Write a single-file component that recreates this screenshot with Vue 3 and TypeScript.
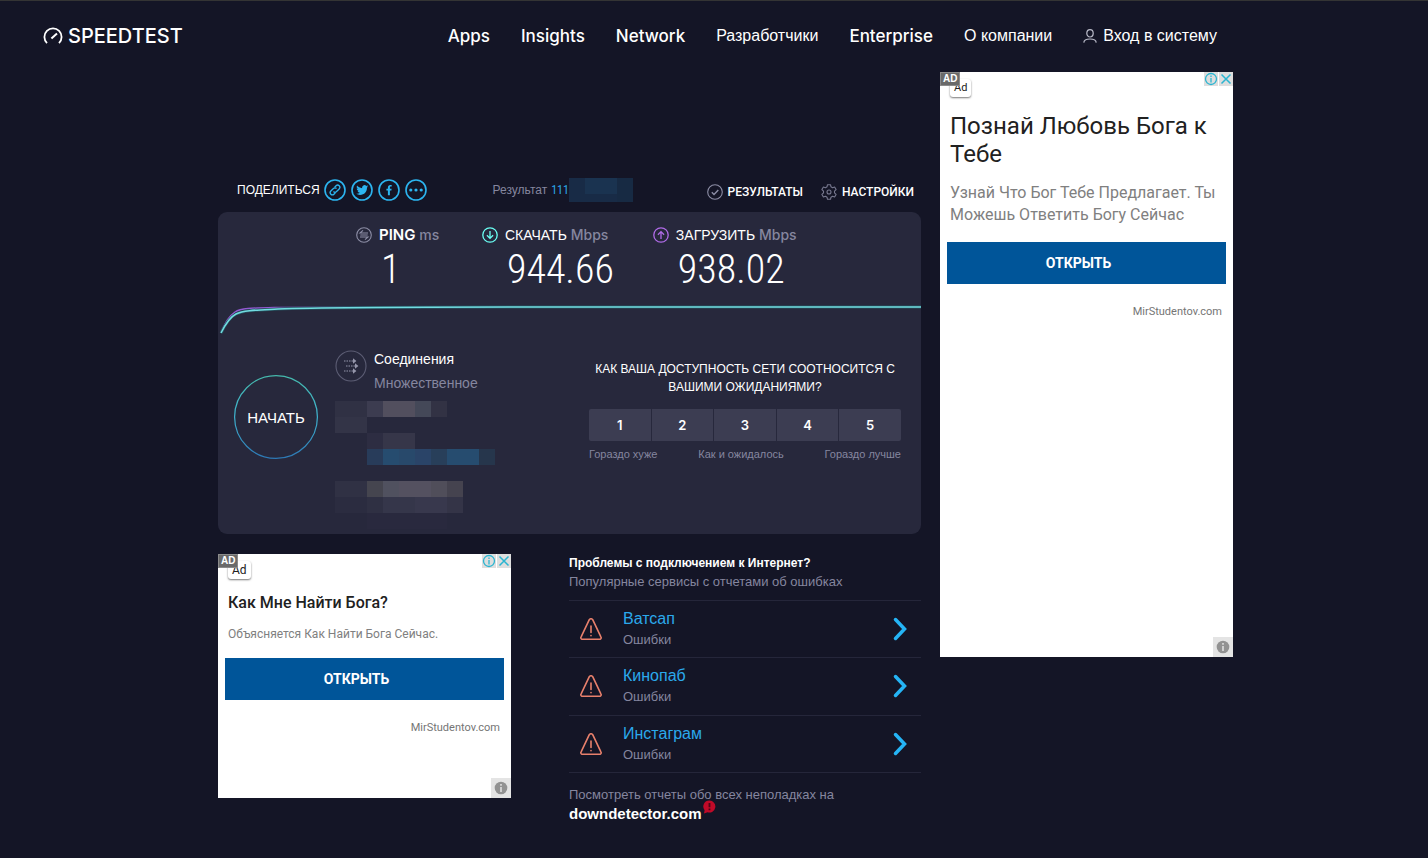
<script setup lang="ts">
interface NavItem { label: string; latin: boolean }
interface Cell { x: number; y: number; w: number; fill: string }
interface Ad { id: string; title: string; text: string; large: boolean }

const nav: NavItem[] = [
  { label: 'Apps', latin: true },
  { label: 'Insights', latin: true },
  { label: 'Network', latin: true },
  { label: 'Разработчики', latin: false },
  { label: 'Enterprise', latin: true },
  { label: 'О компании', latin: false },
]

const cells: Cell[] = [
  { x: 0, y: 0, w: 2, fill: '#303144' },
  { x: 2, y: 0, w: 1, fill: '#3c3c50' },
  { x: 3, y: 0, w: 2, fill: '#524f5e' },
  { x: 5, y: 0, w: 1, fill: '#444858' },
  { x: 6, y: 0, w: 1, fill: '#323244' },
  { x: 0, y: 1, w: 2, fill: '#333447' },
  { x: 2, y: 2, w: 1, fill: '#2d2d42' },
  { x: 3, y: 2, w: 2, fill: '#363649' },
  { x: 2, y: 3, w: 1, fill: '#283c5a' },
  { x: 3, y: 3, w: 1, fill: '#264c6f' },
  { x: 4, y: 3, w: 1, fill: '#28496b' },
  { x: 5, y: 3, w: 1, fill: '#2a4468' },
  { x: 6, y: 3, w: 1, fill: '#283f5a' },
  { x: 7, y: 3, w: 2, fill: '#264c6f' },
  { x: 9, y: 3, w: 1, fill: '#26364c' },
  { x: 0, y: 5, w: 2, fill: '#303144' },
  { x: 2, y: 5, w: 1, fill: '#45454f' },
  { x: 3, y: 5, w: 1, fill: '#50515f' },
  { x: 4, y: 5, w: 2, fill: '#545160' },
  { x: 6, y: 5, w: 1, fill: '#504e5a' },
  { x: 7, y: 5, w: 1, fill: '#45434f' },
  { x: 0, y: 6, w: 2, fill: '#2b2c40' },
  { x: 2, y: 6, w: 1, fill: '#2f3043' },
  { x: 3, y: 6, w: 2, fill: '#35364a' },
  { x: 5, y: 6, w: 2, fill: '#38384d' },
  { x: 7, y: 6, w: 1, fill: '#343447' },
  { x: 2, y: 7, w: 5, fill: '#29293e' },
]

const ads: Ad[] = [
  { id: 'bottom', title: 'Как Мне Найти Бога?', text: 'Объясняется Как Найти Бога Сейчас.', large: false },
  { id: 'side', title: 'Познай Любовь Бога к Тебе', text: 'Узнай Что Бог Тебе Предлагает. Ты Можешь Ответить Богу Сейчас', large: true },
]

const services: string[] = ['Ватсап', 'Кинопаб', 'Инстаграм']
const scores: number[] = [1, 2, 3, 4, 5]
</script>

<template>
  <div class="page">
    <header class="header">
      <a class="logo" href="#" aria-label="Speedtest">
        <svg class="logo-mark" viewBox="0 0 20 18" fill="none" stroke="#fff" stroke-width="1.8">
          <path d="M4 16.2A8.6 8.6 0 1 1 16 16.2" />
          <path d="M8.4 11.6L14 6.4" stroke-width="2" />
        </svg>
        <span class="logo-text">SPEEDTEST</span>
      </a>
      <nav class="nav">
        <a v-for="item in nav" :key="item.label" href="#" :class="{ latin: item.latin }">{{ item.label }}</a>
        <a class="login" href="#">
          <svg class="user" viewBox="0 0 14 14" fill="none" stroke="#b9bac8" stroke-width="1.2">
            <ellipse cx="7" cy="4.3" rx="3.2" ry="3.7" />
            <path d="M.8 13.6c.2-3 2.6-3.6 6.2-3.6s6 .6 6.200 3.600" />
          </svg>
          <span>Вход в систему</span>
        </a>
      </nav>
    </header>

    <main class="main">
      <div class="content">
        <div class="toolbar">
          <span class="share-title">ПОДЕЛИТЬСЯ</span>
          <div class="share">
            <a href="#" aria-label="Ссылка">
              <svg viewBox="0 0 22 22" fill="none" stroke="#2cb5f0" stroke-width="1.6">
                <circle cx="11" cy="11" r="10" />
                <g stroke-width="1.3" transform="rotate(-45 11 11)">
                  <path d="M9.500 13.200H7.300a2.200 2.200 0 0 1 0-4.400h3.700a2.200 2.200 0 0 1 2.200 2.200" />
                  <path d="M12.500 8.800h2.200a2.200 2.200 0 0 1 0 4.400H11A2.200 2.200 0 0 1 8.800 11" />
                </g>
              </svg>
            </a>
            <a href="#" aria-label="Twitter">
              <svg viewBox="0 0 22 22">
                <circle cx="11" cy="11" r="10" fill="none" stroke="#2cb5f0" stroke-width="1.6" />
                <path fill="#2cb5f0" transform="translate(5.200 5) scale(.5)" d="M23.950 4.570a10 10 0 0 1-2.820.770 4.960 4.960 0 0 0 2.160-2.720c-.95.550-2 .950-3.130 1.180A4.920 4.920 0 0 0 11.780 8.300C7.690 8.100 4.070 6.130 1.640 3.160a4.930 4.930 0 0 0 1.520 6.570 4.900 4.900 0 0 1-2.230-.610v.060a4.920 4.920 0 0 0 3.950 4.830 5 5 0 0 1-2.210.080 4.940 4.940 0 0 0 4.600 3.420A9.870 9.870 0 0 1 0 19.540 13.990 13.990 0 0 0 7.550 21.750c9.050 0 14-7.500 14-13.980 0-.210 0-.420-.020-.630a9.940 9.940 0 0 0 2.420-2.570z" />
              </svg>
            </a>
            <a href="#" aria-label="Facebook">
              <svg viewBox="0 0 22 22">
                <circle cx="11" cy="11" r="10" fill="none" stroke="#2cb5f0" stroke-width="1.6" />
                <path fill="#2cb5f0" d="M9.900 16.200v-4.700H8.400V9.700h1.500V8.400c0-1.600.9-2.500 2.400-2.500l1.400.1v1.600h-.9c-.7 0-.9.400-.9.900v1.200h1.700l-.2 1.800h-1.500v4.700z" />
              </svg>
            </a>
            <a href="#" aria-label="Ещё">
              <svg viewBox="0 0 22 22" fill="#2cb5f0">
                <circle cx="11" cy="11" r="10" fill="none" stroke="#2cb5f0" stroke-width="1.6" />
                <circle cx="5.800" cy="11" r="1.600" /><circle cx="11" cy="11" r="1.600" /><circle cx="16.200" cy="11" r="1.600" />
              </svg>
            </a>
          </div>
          <div class="result">
            <span>Результат</span>
            <a href="#">111</a>
            <svg class="result-mask" viewBox="0 0 64 24" aria-hidden="true">
              <rect width="64" height="24" fill="#182b46" />
              <rect x="16" width="32" height="16" fill="#1a3350" />
              <rect x="48" width="16" height="24" fill="#172a43" />
            </svg>
          </div>
          <div class="tools">
            <a href="#">
              <svg viewBox="0 0 16 16" fill="none" stroke="#8d8ea6" stroke-width="1.100">
                <circle cx="8" cy="8" r="7.300" />
                <path d="M4.800 8.300l2.200 2.200 4.300-4.600" stroke-width="1.400" />
              </svg>
              <span>РЕЗУЛЬТАТЫ</span>
            </a>
            <a href="#">
              <svg viewBox="0 0 16 16" fill="none" stroke="#77788f" stroke-width="1.100" stroke-linejoin="round">
                <path d="M6.500.7h3l.5 2.100 1.500.9 2.100-.7 1.500 2.600-1.600 1.500v1.800l1.600 1.500-1.500 2.600-2.100-.7-1.500.9-.5 2.100h-3L6 13.200l-1.500-.9-2.100.7-1.500-2.600 1.600-1.500V7.100L.9 5.600 2.400 3l2.100.7L6 2.800z" />
                <circle cx="8" cy="8" r="2" />
              </svg>
              <span>НАСТРОЙКИ</span>
            </a>
          </div>
        </div>

        <section class="card">
          <div class="metrics">
            <div class="metric">
              <svg viewBox="0 0 16 16" fill="none" stroke="#8d8ea6" stroke-width="1.100">
                <circle cx="8" cy="8" r="7.300" />
                <path d="M12 6H4l3-2.600M4.300 8h7.400M4 10h8l-3 2.600" />
              </svg>
              <div class="metric-label"><b>PING</b> <span>ms</span></div>
              <div class="value">1</div>
            </div>
            <div class="metric">
              <svg viewBox="0 0 16 16" fill="none" stroke="#6afff3" stroke-width="1.300">
                <circle cx="8" cy="8" r="7.200" />
                <path d="M8 4v7.400M4.900 8.300L8 11.400l3.100-3.100" />
              </svg>
              <div class="metric-label"><strong>СКАЧАТЬ</strong> <span>Mbps</span></div>
              <div class="value">944.66</div>
            </div>
            <div class="metric">
              <svg viewBox="0 0 16 16" fill="none" stroke="#b06be8" stroke-width="1.300">
                <circle cx="8" cy="8" r="7.200" />
                <path d="M8 12V4.600M4.900 7.700L8 4.600l3.100 3.100" />
              </svg>
              <div class="metric-label"><strong>ЗАГРУЗИТЬ</strong> <span>Mbps</span></div>
              <div class="value">938.02</div>
            </div>
          </div>

          <svg class="chart" viewBox="0 0 703 32" preserveAspectRatio="none" fill="none" aria-hidden="true">
            <path d="M3 30C8 20 11 14 17 10C23 6 34 6 60 5.500L703 5" stroke="#9259d0" stroke-width="1.500" />
            <path d="M3 31C8 21 12 15 18 12C26 8 40 8 60 7C110 5 180 5 300 5H703" stroke="#24535f" stroke-width="3" />
            <path d="M3 31C8 21 12 15 18 12C26 8 40 8 60 7C110 5 180 5 300 5H703" stroke="#72dbe0" stroke-width="1.500" />
          </svg>

          <div class="details">
            <button class="start" type="button">
              <svg class="ring" viewBox="0 0 84 84" fill="none" aria-hidden="true">
                <defs>
                  <linearGradient id="ring" x1="0" y1="0" x2="0" y2="1">
                    <stop offset="0" stop-color="#45b9ac" />
                    <stop offset=".5" stop-color="#3fb3d0" />
                    <stop offset="1" stop-color="#2d78b5" />
                  </linearGradient>
                </defs>
                <circle cx="42" cy="42" r="41.400" stroke="url(#ring)" stroke-width="1.200" />
              </svg>
              <span>НАЧАТЬ</span>
            </button>

            <div class="connection">
              <div class="connection-head">
                <svg viewBox="0 0 32 32" fill="none" stroke="#5c5d74" stroke-width="1.100">
                  <circle cx="16" cy="16" r="15" />
                  <g stroke="#9596ab">
                    <path d="M9 11h9M11 16h9M9 21h9" stroke-dasharray="1.500 1" />
                    <path fill="#9596ab" stroke="none" d="M18 8.300l3.400 2.700-3.400 2.700zM20 13.300l3.400 2.700-3.400 2.700zM18 18.300l3.400 2.700-3.400 2.700z" />
                  </g>
                </svg>
                <div class="connection-text">
                  <strong>Соединения</strong>
                  <span>Множественное</span>
                </div>
              </div>
              <svg class="mask" viewBox="0 0 160 128" aria-hidden="true" shape-rendering="crispEdges">
                <rect v-for="(c, i) in cells" :key="i" :x="c.x * 16" :y="c.y * 16" :width="c.w * 16" height="16" :fill="c.fill" />
              </svg>
            </div>

            <div class="rating">
              <h2>КАК ВАША ДОСТУПНОСТЬ СЕТИ СООТНОСИТСЯ С ВАШИМИ ОЖИДАНИЯМИ?</h2>
              <div class="scores">
                <button v-for="n in scores" :key="n" type="button">{{ n }}</button>
              </div>
              <div class="legend">
                <span>Гораздо хуже</span><span>Как и ожидалось</span><span>Гораздо лучше</span>
              </div>
            </div>
          </div>
        </section>

        <section class="problems">
          <h2>Проблемы с подключением к Интернет?</h2>
          <p>Популярные сервисы с отчетами об ошибках</p>
          <ul>
            <li v-for="service in services" :key="service">
              <svg class="warn" viewBox="0 0 22 22" fill="none" stroke="#e8806c" stroke-width="1.600" stroke-linejoin="round" stroke-linecap="round">
                <path d="M9.300 1.700a2 2 0 0 1 3.400 0l8.300 17.400a1.500 1.500 0 0 1-1.400 2.200H2.400a1.500 1.500 0 0 1-1.400-2.200z" />
                <path d="M11 8v6.500M11 17.500v.2" />
              </svg>
              <div class="service">
                <a href="#">{{ service }}</a>
                <span>Ошибки</span>
              </div>
              <svg class="chevron" viewBox="0 0 14 24" fill="none" stroke="#25b4f5" stroke-width="3.500" stroke-linecap="round">
                <path d="M2.500 2.500L11.500 12l-9 9.500" />
              </svg>
            </li>
          </ul>
          <p class="all">Посмотреть отчеты обо всех неполадках на</p>
          <a class="detector" href="#">
            <span>downdetector.com</span>
            <svg viewBox="0 0 13 14">
              <path fill="#c00a28" d="M6.500.5a6 6 0 1 1-2 11.700L1 13.500l.6-3.300A6 6 0 0 1 6.500.5z" />
              <path stroke="#4d0616" stroke-width="1.800" d="M6.500 3v4.300M6.500 8.600v1.600" />
            </svg>
          </a>
        </section>
      </div>

      <aside v-for="ad in ads" :key="ad.id" class="ad" :class="[ad.id, { large: ad.large }]">
        <span class="ad-badge">AD</span>
        <div class="ad-controls">
          <button type="button" aria-label="Информация">
            <svg viewBox="0 0 14 14" fill="none" stroke="#2ab5d1" stroke-width="1.300">
              <circle cx="7" cy="7" r="5.500" /><path d="M7 6v4.500M7 3.600v1.300" />
            </svg>
          </button>
          <button type="button" aria-label="Закрыть">
            <svg viewBox="0 0 14 14" fill="none" stroke="#2ab5d1" stroke-width="1.500"><path d="M2.500 2.500l9 9M11.500 2.500l-9 9" /></svg>
          </button>
        </div>
        <span class="ad-chip">Ad</span>
        <h3>{{ ad.title }}</h3>
        <p>{{ ad.text }}</p>
        <a class="open" href="#">ОТКРЫТЬ</a>
        <span class="domain">MirStudentov.com</span>
        <button class="ad-info" type="button" aria-label="Об объявлении">
          <svg viewBox="0 0 14 14"><circle cx="7" cy="7" r="6.300" fill="#929292" /><path d="M7 6v5M7 3v1.700" stroke="#dadada" stroke-width="1.700" /></svg>
        </button>
      </aside>
    </main>
  </div>
</template>

<style>
body {
  margin: 0;
  background: #141526;
}
</style>

<style scoped>
* {
  box-sizing: border-box;
}
svg {
  display: block;
  flex: none;
}
a {
  color: inherit;
  text-decoration: none;
}
button {
  border: 0;
  padding: 0;
  margin: 0;
  background: none;
  color: inherit;
  font: inherit;
  cursor: pointer;
}
h2, h3, p, ul {
  margin: 0;
  padding: 0;
  font-weight: 400;
}
.page {
  min-height: 100vh;
  border-top: 1px solid #343434;
  background: #141526;
  color: #fff;
  font-family: "Liberation Sans", Arial, sans-serif;
}
.header {
  display: flex;
  align-items: center;
  justify-content: space-between;
  height: 71px;
  padding: 0 211px 2px 43px;
}
.logo {
  display: flex;
  align-items: center;
  gap: 5px;
}
.logo-mark {
  width: 20px;
  height: 18px;
}
.logo-text {
  font: 500 20px/24px Inter, sans-serif;
}
.nav {
  display: flex;
  align-items: center;
  gap: 31px;
  font-size: 16px;
  line-height: 24px;
  white-space: nowrap;
}
.latin {
  font-family: Inter, sans-serif;
  font-weight: 500;
  font-size: 17px;
}
.login {
  display: flex;
  align-items: center;
  gap: 6px;
}
.user {
  width: 14px;
  height: 14px;
}
.main {
  display: grid;
  grid-template-columns: 293px minmax(0, 410px) 312px;
  justify-content: center;
  padding-left: 23px;
}
.content {
  display: contents;
}
.toolbar {
  grid-column: 1 / 3;
  grid-row: 1;
  display: flex;
  align-items: center;
  height: 24px;
  margin: 106px 0 10px;
  padding: 0 7px 0 19px;
  font-size: 12px;
  line-height: 24px;
  white-space: nowrap;
}
.share {
  display: flex;
  gap: 5px;
  margin-left: 4px;
}
.share svg {
  width: 22px;
  height: 22px;
}
.result {
  display: flex;
  align-items: center;
  margin-left: 66px;
  color: #85869f;
}
.result a {
  margin-left: 4px;
  color: #2ba5e4;
  font-family: "Roboto Condensed", Roboto, sans-serif;
}
.result-mask {
  width: 64px;
  height: 24px;
}
.tools {
  display: flex;
  gap: 18px;
  margin-left: auto;
  font-family: Roboto, sans-serif;
  font-weight: 500;
}
.tools a {
  display: flex;
  align-items: center;
  gap: 5px;
  padding-top: 4px;
}
.tools svg {
  width: 16px;
  height: 16px;
}
.card {
  grid-column: 1 / 3;
  grid-row: 2;
  padding: 12px 0 5px;
  border-radius: 9px;
  background: #27283c;
}
.metrics {
  display: flex;
  gap: 39px;
  padding-left: 138px;
}
.metric {
  display: grid;
  grid-template-columns: 16px auto;
  column-gap: 7px;
  align-items: center;
}
.metric svg {
  width: 16px;
  height: 16px;
}
.metric-label {
  height: 22px;
  font-size: 14px;
  line-height: 22px;
  white-space: nowrap;
}
.metric-label b {
  font: 600 15px/22px Inter, sans-serif;
}
.metric-label strong {
  font-weight: 400;
}
.metric-label span {
  color: #85869f;
  font: 500 14px/22px Inter, sans-serif;
}
.metric:first-child {
  min-width: 87px;
}
.value {
  grid-column: 2;
  padding-left: 2px;
  font: 300 40px/48px "Roboto Condensed", Roboto, sans-serif;
}
.chart {
  width: 100%;
  height: 32px;
  margin-top: 8px;
}
.details {
  display: flex;
  align-items: flex-start;
  padding: 0 20px 0 16px;
}
.start {
  position: relative;
  flex: none;
  width: 84px;
  height: 84px;
  margin-top: 41px;
  border-radius: 50%;
  font-size: 15px;
}
.ring {
  position: absolute;
  inset: 0;
}
.connection {
  margin-left: 17px;
  padding-top: 13px;
}
.connection-head {
  display: flex;
  align-items: flex-start;
  gap: 7px;
}
.connection-head svg {
  width: 32px;
  height: 32px;
  margin-top: 3px;
}
.connection-text {
  display: flex;
  flex-direction: column;
  font-size: 14px;
  line-height: 24px;
}
.connection-text strong {
  font-weight: 400;
}
.connection-text span {
  color: #85869f;
}
.mask {
  width: 160px;
  height: 128px;
  margin-top: 6px;
}
.rating {
  width: 312px;
  margin-left: auto;
  padding-top: 26px;
}
.rating h2 {
  font-size: 12px;
  line-height: 18px;
  text-align: center;
}
.scores {
  display: grid;
  grid-template-columns: repeat(5, 1fr);
  gap: 1px;
  margin-top: 13px;
  overflow: hidden;
  border-radius: 2px;
}
.scores button {
  height: 32px;
  background: #3c3d52;
  font: 600 13px/32px Inter, sans-serif;
}
.legend {
  display: flex;
  justify-content: space-between;
  margin-top: 6px;
  color: #85869f;
  font-size: 11px;
  line-height: 14px;
}
.problems {
  grid-column: 2;
  grid-row: 3;
  margin: 20px 0 0 58px;
}
.problems h2 {
  font-size: 12px;
  font-weight: 700;
  line-height: 18px;
}
.problems p {
  color: #85869f;
  font-size: 13px;
  line-height: 20px;
}
.problems ul {
  display: grid;
  grid-auto-rows: 1fr;
  height: 173px;
  margin-top: 8px;
  border-top: 1px solid #25263a;
  list-style: none;
}
.problems li {
  display: flex;
  align-items: center;
  padding: 0 14px 0 11px;
  border-bottom: 1px solid #25263a;
}
.warn {
  width: 22px;
  height: 22px;
}
.service {
  display: flex;
  flex: 1;
  flex-direction: column;
  margin-left: 21px;
  line-height: 21px;
}
.service a {
  color: #2ba9ec;
  font-size: 16px;
}
.service span {
  color: #85869f;
  font-size: 13px;
}
.chevron {
  width: 14px;
  height: 24px;
}
.problems .all {
  margin-top: 12px;
}
.detector {
  display: flex;
  align-items: flex-start;
  gap: 1px;
  font-size: 15px;
  font-weight: 700;
  line-height: 18px;
}
.detector svg {
  width: 13px;
  height: 14px;
  margin-top: -5px;
}
.ad {
  position: relative;
  display: flex;
  flex-direction: column;
  align-items: flex-start;
  padding: 7px 7px 20px;
  background: #fff;
  color: #212121;
  font-family: Roboto, sans-serif;
}
.bottom {
  grid-column: 1;
  grid-row: 3;
  align-self: start;
  min-height: 244px;
  margin-top: 20px;
}
.side {
  grid-column: 3;
  grid-row: 1 / 4;
  align-self: start;
  min-height: 585px;
  margin-left: 19px;
}
.ad-badge {
  position: absolute;
  top: 0;
  left: 0;
  padding: 0 2px;
  border: 1px solid #8b8b8b;
  background: #6a6a6a;
  color: #fff;
  font: 700 10px/12px "Liberation Sans", sans-serif;
}
.ad-controls {
  position: absolute;
  top: 0;
  right: 0;
  display: flex;
  gap: 1px;
}
.ad-controls button {
  background: #dedede;
}
.ad-controls svg {
  width: 14px;
  height: 14px;
}
.ad-chip {
  margin-left: 3px;
  padding: 0 4px;
  border-radius: 3px;
  box-shadow: 0 1px 2px #777;
  font-size: 12px;
  line-height: 18px;
}
.ad h3 {
  margin: 14px 3px 0;
  font-size: 16px;
  font-weight: 500;
  line-height: 19px;
}
.ad p {
  margin: 13px 3px 0;
  color: #808080;
  font-size: 12px;
  line-height: 18px;
}
.open {
  align-self: stretch;
  margin-top: 15px;
  padding-right: 16px;
  background: #005599;
  color: #fff;
  font-size: 14px;
  font-weight: 700;
  line-height: 42px;
  text-align: center;
}
.domain {
  align-self: flex-end;
  margin: 21px 4px 0;
  color: #757575;
  font-size: 11px;
  line-height: 14px;
}
.ad-info {
  position: absolute;
  right: 0;
  bottom: 0;
  display: grid;
  place-items: center;
  width: 20px;
  height: 20px;
  background: #e4e4e4;
}
.ad-info svg {
  width: 14px;
  height: 14px;
}
.large .ad-chip {
  font-size: 11px;
}
.large h3 {
  margin-top: 15px;
  font-size: 24px;
  font-weight: 400;
  line-height: 28px;
}
.large p {
  margin-top: 14px;
  font-size: 16px;
  line-height: 22px;
}
.large .open {
  margin-top: 16px;
}
</style>
